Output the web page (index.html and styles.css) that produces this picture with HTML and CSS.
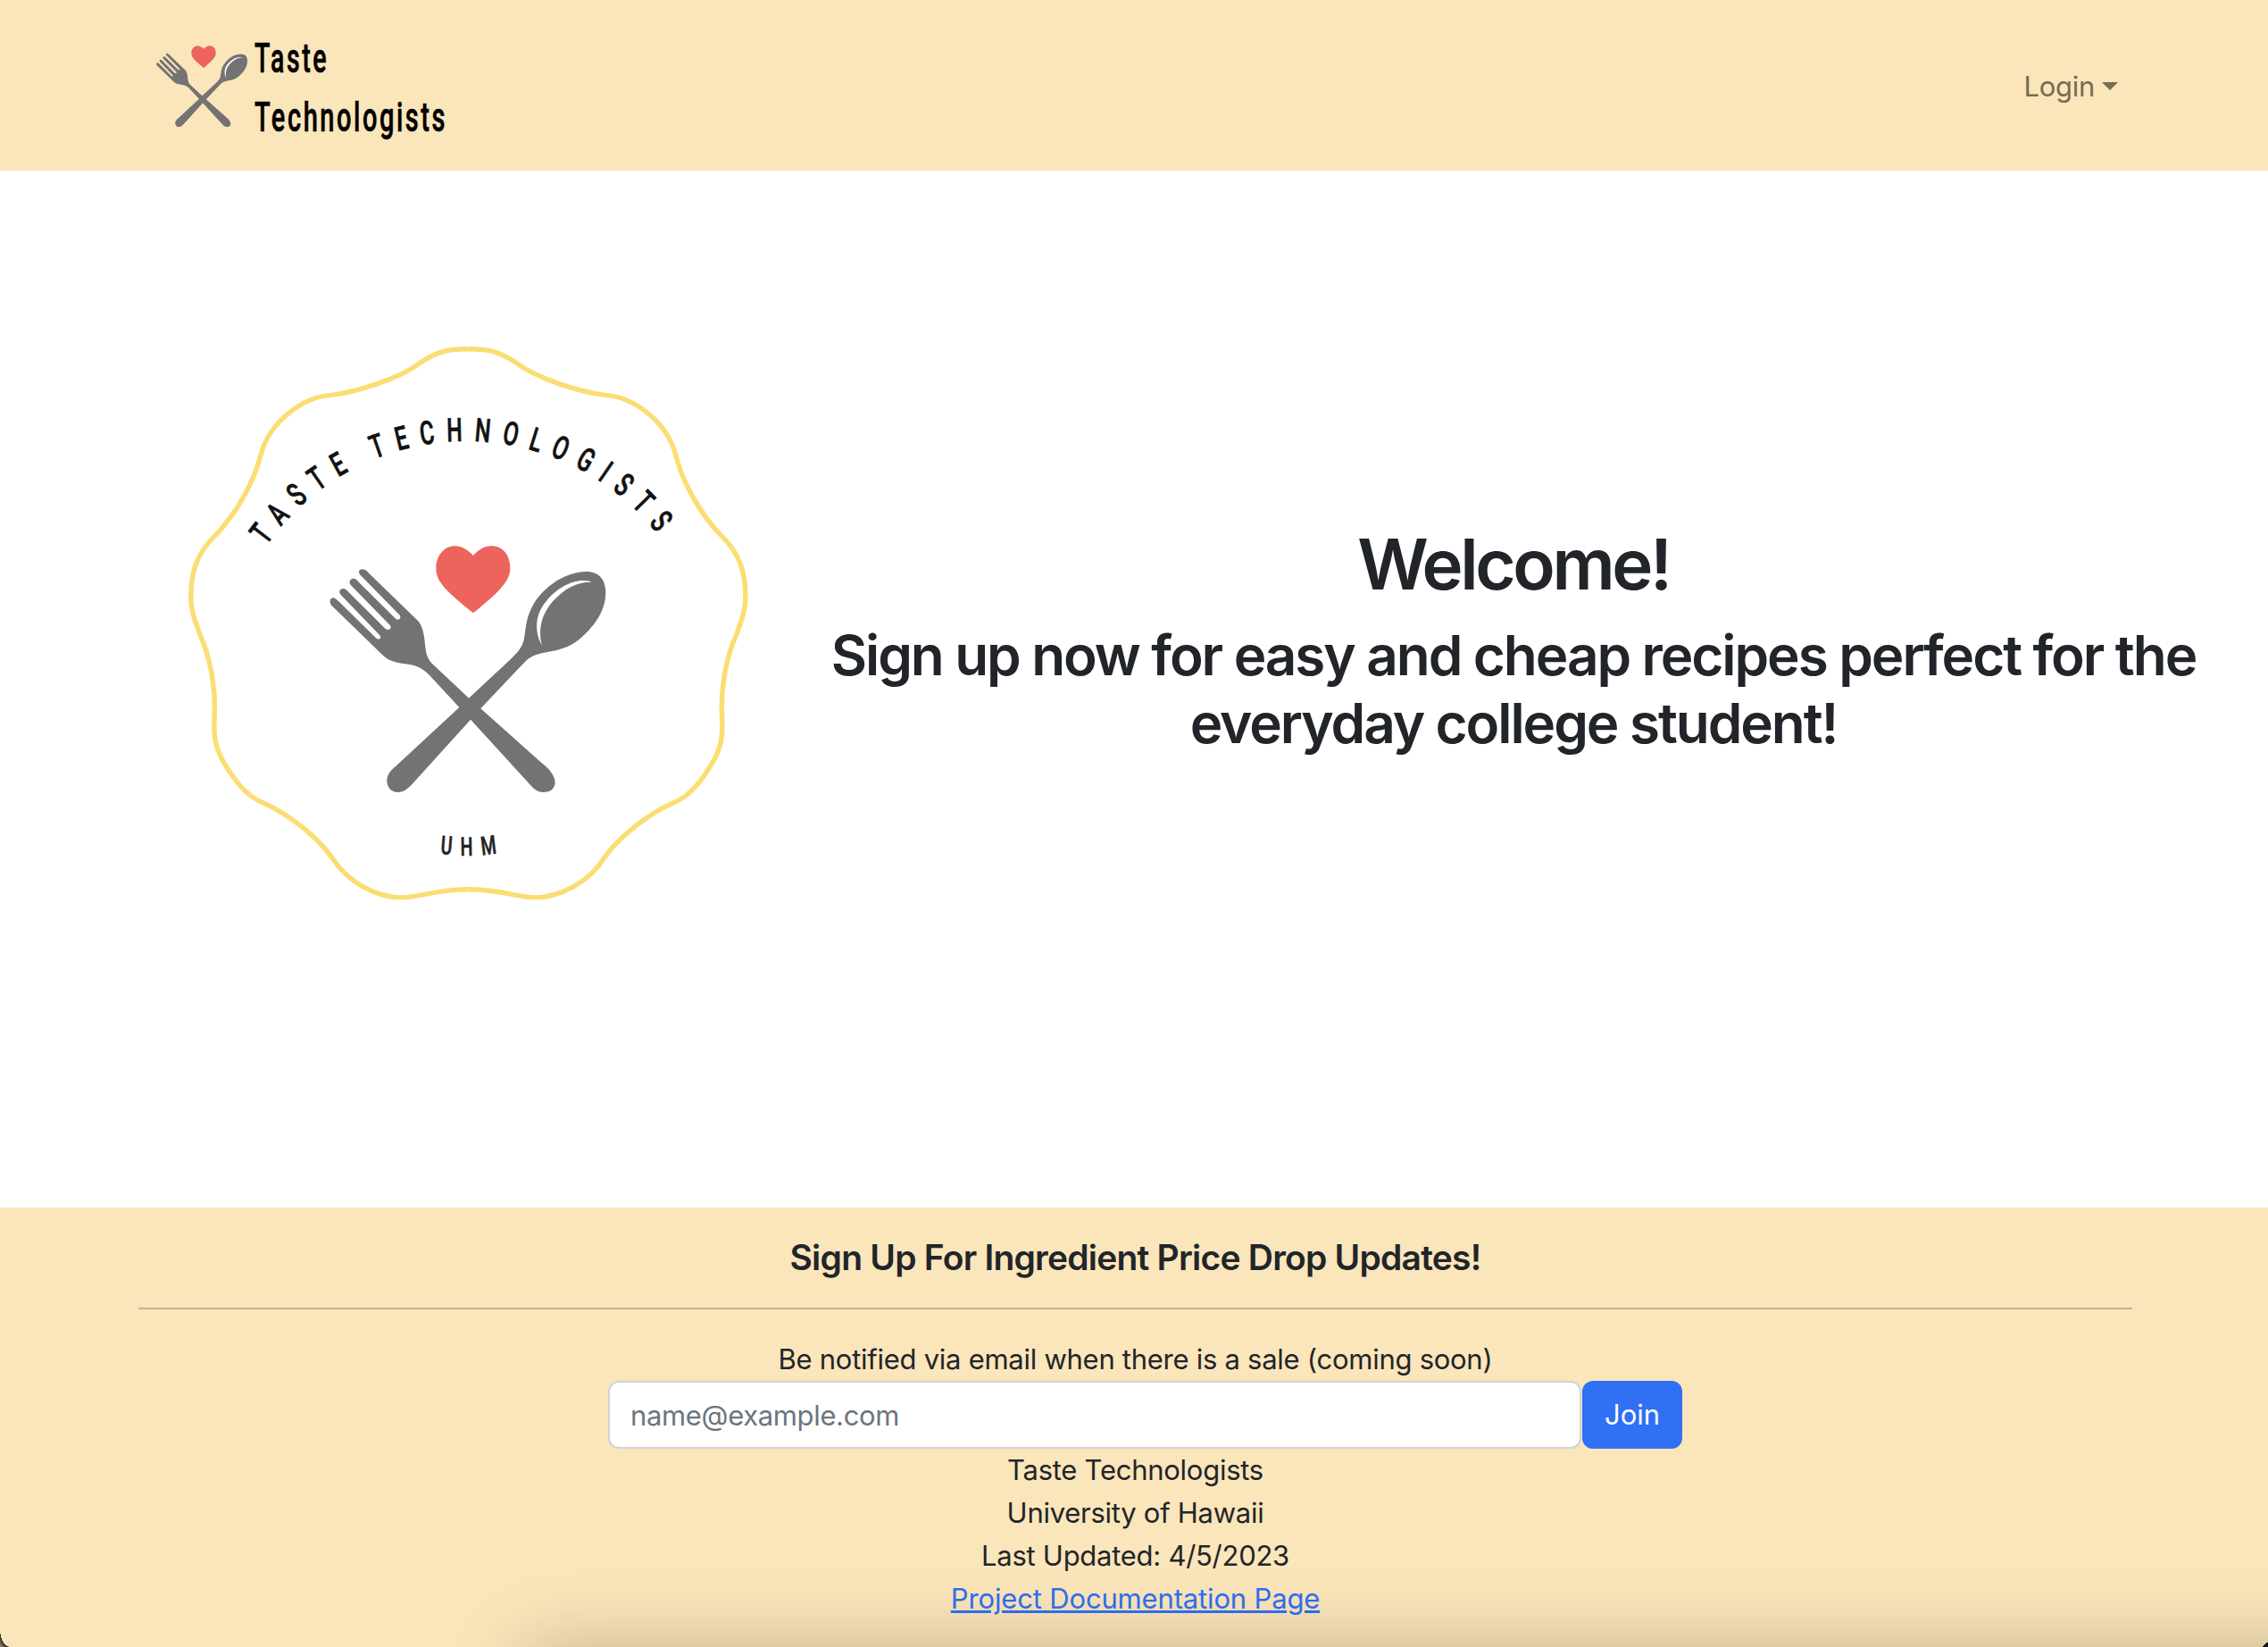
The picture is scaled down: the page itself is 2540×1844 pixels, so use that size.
FILE: index.html
```html
<!DOCTYPE html>
<html lang="en">
<head>
<meta charset="utf-8">
<title>Taste Technologists</title>
<link rel="stylesheet" href="styles.css">
</head>
<body>
<svg class="defs" aria-hidden="true">
  <symbol id="cutlery" viewBox="0 0 1050 960">
    <path fill="#ed645d" d="M540 96C520 75 500 64 478 64C440 64 415 100 415 138C415 184 445 212 540 289C636 212 664 178 664 138C664 95 640 64 600 64C578 64 560 75 540 96Z"/>
    <path fill="#737373" d="M168 142C178 143 184 149 190 156L357 318C375 345 375 370 380 410C383 435 392 450 405 462L525 575L565 610L770 793C800 815 815 840 815 862C810 885 795 891 775 891C755 890 745 880 735 870L530 646L493 606L392 497C370 475 350 465 325 462C290 457 260 455 235 430L62 262C55 250 60 238 70 238C78 240 82 245 90 252L213 373C222 382 234 372 226 364L95 228C86 218 92 206 104 207C112 208 118 215 122 220L245 342C254 350 268 342 261 331L129 196C120 186 126 173 138 173C146 174 152 180 155 185L279 308C288 316 300 307 293 296L159 160C152 150 158 141 168 142Z"/>
    <path fill="#737373" d="M920 150C965 150 985 180 985 220C985 280 950 330 905 370C870 402 835 412 800 418C760 426 740 430 720 447L700 467L565 610L340 858C320 880 305 892 285 891C262 891 249 870 250 850C251 830 265 815 280 803L493 606L525 575L665 445C690 420 705 405 711 375C718 330 718 300 745 255C780 200 850 150 920 150Z"/>
    <path fill="#fff" d="M935 183C880 170 820 205 785 250C747 295 745 350 770 397C757 340 770 295 805 252C845 208 885 185 935 185Z"/>
  </symbol>
</svg>

<header class="navbar">
  <a class="brand">
    <svg width="360" height="171" viewBox="168 20 360 171">
      <use href="#cutlery" x="168.7" y="44.1" width="115.5" height="105.6"/>
      <g class="brand-text">
        <text x="285" y="81" textLength="83" lengthAdjust="spacingAndGlyphs">Taste</text>
        <text x="285" y="147" textLength="216" lengthAdjust="spacingAndGlyphs">Technologists</text>
      </g>
    </svg>
  </a>
  <a class="login"><span class="login-label">Login</span><span class="caret"></span></a>
</header>

<main class="hero">
  <svg class="badge" viewBox="0 0 1568 1568">
    <defs>
      <path id="half" d="M771 71C830 71 850 78 893 105C945 145 1050 180 1125 190C1200 195 1285 260 1307 345C1325 420 1375 500 1420 548C1475 600 1487 650 1487 710C1487 760 1470 785 1465 805C1435 870 1424 950 1426 1010C1430 1070 1425 1105 1395 1150C1360 1205 1335 1228 1300 1243C1235 1272 1160 1330 1122 1385C1085 1445 1010 1487 940 1487C905 1487 850 1466 771 1466"/>
      <path id="arc-top" d="M218 630A628 628 0 0 1 1294 597"/>
      <path id="arc-bottom" d="M640 1363A560 560 0 0 0 900 1363"/>
    </defs>
    <g class="seal">
      <use href="#half"/>
      <use href="#half" transform="translate(1542 0) scale(-1 1)"/>
    </g>
    <text class="seal-text"><textPath href="#arc-top" startOffset="60" textLength="1200" lengthAdjust="spacingAndGlyphs">TASTE TECHNOLOGISTS</textPath></text>
    <use href="#cutlery" x="369" y="530.3" width="807" height="737.9"/>
    <text class="seal-sub"><textPath href="#arc-bottom" startOffset="60" textLength="170" lengthAdjust="spacingAndGlyphs">UHM</textPath></text>
  </svg>
  <div class="intro">
    <h1>Welcome!</h1>
    <h2><span>Sign up now for easy and cheap recipes perfect for the</span> <span>everyday college student!</span></h2>
  </div>
</main>

<footer class="footer">
  <h5>Sign Up For Ingredient Price Drop Updates!</h5>
  <hr>
  <div>Be notified via email when there is a sale (coming soon)</div>
  <form class="join">
    <input type="email" placeholder="name@example.com">
    <button type="button">Join</button>
  </form>
  <div>Taste Technologists</div>
  <div>University of Hawaii</div>
  <div>Last Updated: 4/5/2023</div>
  <a class="docs">Project Documentation Page</a>
  <div class="shade"></div>
  <div class="corner corner-left"></div>
  <div class="corner corner-right"></div>
</footer>
</body>
</html>
```
FILE: styles.css
```css
* { box-sizing: border-box; }

body {
  margin: 0;
  height: 1844px;
  overflow: hidden;
  display: flex;
  flex-direction: column;
  background: #fff;
  color: #212529;
  font: 31px/48px Inter, "Liberation Sans", sans-serif;
  letter-spacing: -.27px;
}

.defs { position: absolute; width: 0; height: 0; }

.navbar {
  height: 191px;
  flex: none;
  display: flex;
  align-items: center;
  justify-content: space-between;
  padding: 0 168px;
  background: #fbe5ba;
}
.brand svg { display: block; margin-top: 20px; overflow: visible; }
.brand-text { font: 500 46px Roboto, sans-serif; letter-spacing: 4px; fill: #000; stroke: #000; stroke-width: .6; }
.login { display: flex; align-items: center; gap: 8px; color: #746c54; padding-top: 2px; }
.caret { border: 9px solid transparent; border-top-color: #746c54; border-bottom: 0; }

.hero {
  flex: 1;
  display: flex;
  align-items: center;
  padding-left: 190px;
}
.badge { width: 680px; height: 680px; flex: none; margin-top: -143px; }
.seal { fill: none; stroke: #fbdd72; stroke-width: 12.5; }
.seal-text { font: 500 84px Roboto, sans-serif; letter-spacing: 44px; fill: #111; stroke: #111; stroke-width: 1.5; }
.seal-sub { font: 500 66px Roboto, sans-serif; letter-spacing: 34px; fill: #222; stroke: #222; stroke-width: 1.5; }

.intro { width: 1650px; text-align: center; margin-top: -112px; }
h1, h2, h5 { margin: 0; font-weight: 600; }
h1 { font-size: 78px; line-height: 96px; margin-bottom: 16px; letter-spacing: -3.4px; }
h2 { font-size: 62px; line-height: 76px; letter-spacing: -2.08px; }
h2 span { display: block; }

.footer {
  height: 492px;
  flex: none;
  position: relative;
  overflow: hidden;
  padding: 32px 152px 0 155px;
  text-align: center;
  background: #fbe5ba;
}
h5 { font-size: 39px; line-height: 48px; letter-spacing: -.78px; }
hr { margin: 32px 0; border: 0; height: 2px; background: #c5b491; }
.join { display: flex; gap: 1px; margin-left: 526px; }
input {
  width: 1090px;
  height: 76px;
  padding: 0 23px;
  border: 2px solid #ced4da;
  border-radius: 12px;
  background: #fff;
  font: inherit;
  letter-spacing: -.35px;
}
input::placeholder { color: #6c757d; opacity: 1; }
button {
  width: 112px;
  height: 76px;
  padding: 0;
  border: 0;
  border-radius: 12px;
  background: #2f70f5;
  color: #fff;
  font: inherit;
}
.docs {
  color: #2f70f5;
  letter-spacing: -.16px;
  text-decoration: underline;
  text-decoration-thickness: 3px;
}

/* soft shadow rising from below the window's bottom edge */
.shade {
  position: absolute;
  left: 585px;
  right: -200px;
  top: 498px;
  height: 200px;
  border-radius: 30px;
  box-shadow: 0 0 90px rgba(20, 10, 0, .26);
}
.corner { position: absolute; bottom: 0; }
.corner-left {
  left: 0;
  width: 11px;
  height: 19px;
  background: radial-gradient(ellipse 11px 19px at 100% 0, transparent 97%, #2a241a 100%, #857556 125%);
}
.corner-right {
  right: 0;
  width: 7px;
  height: 6px;
  background: linear-gradient(to bottom right, transparent 50%, #10161a 52%);
}
```
